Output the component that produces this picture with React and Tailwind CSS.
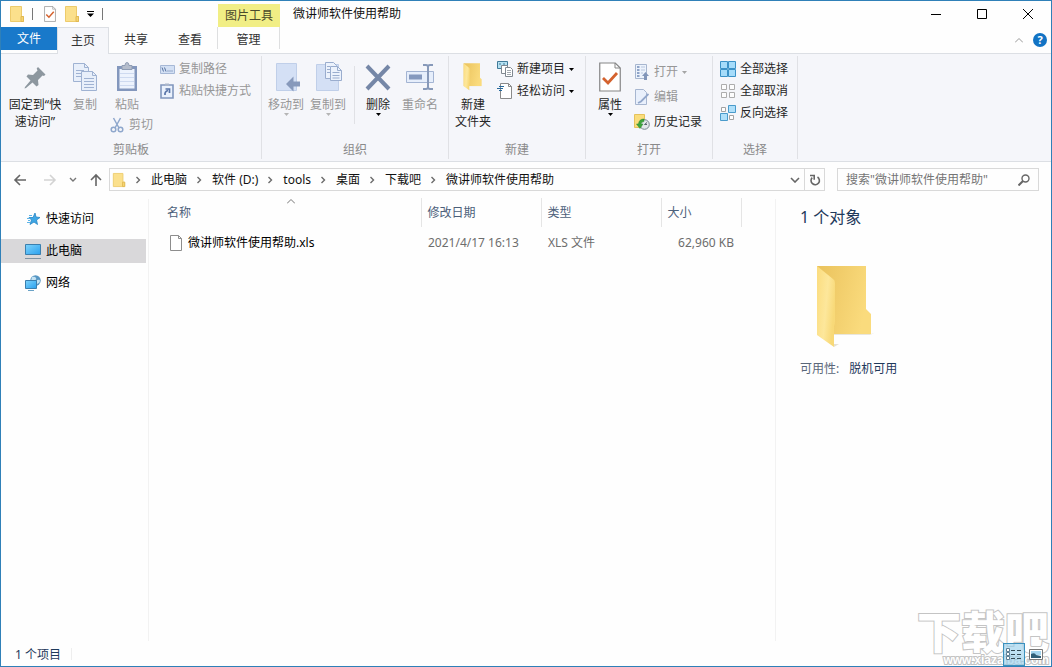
import { useState } from 'react';

const BigFolder = ({ className }) => (
  <svg viewBox="0 0 60 84" className={className}>
    <defs>
      <linearGradient id="folderBack" x1="0" y1="0" x2="1" y2="0.3">
        <stop offset="0" stopColor="#eac25c" />
        <stop offset="1" stopColor="#fadb7d" />
      </linearGradient>
      <linearGradient id="folderFront" x1="0" y1="0" x2="1" y2="0.4">
        <stop offset="0" stopColor="#fbdc7e" />
        <stop offset="0.6" stopColor="#fde79b" />
        <stop offset="1" stopColor="#f8d978" />
      </linearGradient>
    </defs>
    <path d="M18 69h38l5 -2l-6 3H18z" fill="#e9e6dc" />
    <path d="M2 1h49v43l5 5v20H2z" fill="url(#folderBack)" />
    <path d="M2 1l16 13q2 1 2 4v38q0 3-1 5v21L2 70z" fill="url(#folderFront)" />
    <path d="M19 82l5 -3h-5z" fill="#e5e1d4" />
  </svg>
);

const FolderIcon = ({ className = 'h-4 w-4' }) => (
  <svg viewBox="0 0 16 16" className={className}>
    <path d="M1.500.5h11v10h2v5h-13z" fill="#fbe08c" stroke="#edcb6b" />
    <path d="M12 10.500h2.500v5H12z" fill="#f7d570" stroke="#e0b955" />
  </svg>
);

const CheckDoc = ({ className }) => (
  <svg viewBox="0 0 22 30" className={className} fill="none">
    <path d="M.75 1h15.500l5 5v23H.75z" fill="#fff" stroke="#858585" strokeWidth="1.200" />
    <path d="M16 1v5h5" stroke="#858585" />
    <path d="M4 16l5 5 9-10" stroke="#d4622e" strokeWidth="2.800" />
  </svg>
);

const PinIcon = () => (
  <svg viewBox="0 0 24 24" className="h-6 w-6" fill="#8d979f">
    <path d="M15 2l7.500 7.500-1.500 1.500-1.500-.5-4.500 4.500 .5 5-2 1.500-4-4L3 23l-1.500 .5.5-1.500L7.500 15.500l-4-4L5 9.500l5 .5 4.500-4.500-.8-2z" />
  </svg>
);

const CopyIcon = () => (
  <svg viewBox="0 0 26 30" className="h-[30px] w-[26px]" fill="#e8effa" stroke="#9fb2d2">
    <path d="M1.500 1.500h11l4 4v14h-15z" />
    <path d="M12.500 1.500v4h4M4 8.500h8M4 11.500h5M4 14.500h5" fill="none" />
    <path d="M9.500 9.500h11l4 4v15h-15z" />
    <path d="M20.500 9.500v4h4M12 16.500h10M12 19.500h10M12 22.500h10M12 25.500h10" fill="none" />
  </svg>
);

const PasteIcon = () => (
  <svg viewBox="0 0 22 30" className="h-[30px] w-[22px]" fill="none">
    <path d="M1 4h20v25H1z" fill="#8397bd" />
    <path d="M3.500 7h15v19.500h-15z" fill="#edf3fd" />
    <path d="M4 11.500h14M4 15.500h14M4 19.500h14M4 23.500h14" stroke="#cedaf0" />
    <path d="M6 3.500h3q0-3 2-3t2 3h3v4H6z" fill="#b4bccb" stroke="#8f9cb3" />
  </svg>
);

const CutIcon = () => (
  <svg viewBox="0 0 14 16" className="h-4 w-3.5" fill="none" stroke="#8ea7cc" strokeWidth="1.500">
    <path d="M3.500 1l5.500 10M10.500 1L5 11" />
    <circle cx="3.500" cy="12.500" r="2.300" />
    <circle cx="10.500" cy="12.500" r="2.300" />
  </svg>
);

const PathIcon = () => (
  <svg viewBox="0 0 15 9" className="h-[9px] w-[15px]" fill="none">
    <path d="M.5.5h14v8H.5z" fill="#d3e0f4" stroke="#a6b8d6" />
    <path d="M2 2.500l1.500 4M4.500 2.500L6 6.500M7.500 6h1M9.500 6h1M11.500 6h1" stroke="#54709f" />
  </svg>
);

const ShortcutIcon = () => (
  <svg viewBox="0 0 14 16" className="h-4 w-3.5" fill="none">
    <path d="M1 2h12v13H1z" fill="#eaf1fc" stroke="#8197bd" strokeWidth="1.600" />
    <path d="M5 .5h4v2.500H5z" fill="#aab6cb" />
    <path d="M5 12q-.5-3.500 3-4.500M5.500 6h4v4" stroke="#5874a8" strokeWidth="1.700" />
  </svg>
);

const MoveToIcon = () => (
  <svg viewBox="0 0 28 30" className="h-[30px] w-7">
    <path d="M4.500 1.500h20v27h-20z" fill="#d4e0f5" stroke="#c0cfe9" />
    <path d="M14 22l7.500-7.500v5H29v5h-7.500v5z" fill="#8799bb" />
  </svg>
);

const CopyToIcon = () => (
  <svg viewBox="0 0 28 30" className="h-[30px] w-7" fill="#ecf2fc" stroke="#9aadce">
    <path d="M2.500 2.500h22v26h-22z" fill="#d4e0f5" stroke="#c0cfe9" />
    <path d="M11.500.5h8l3 3v13h-11z" />
    <path d="M16.500 4.500h7l4 4v10h-11z" />
    <path d="M23.500 4.500v4h4M18.500 10.500h7M18.500 13.500h7M18.500 16h7M13 4.500h3M13 7.500h3M13 10.500h3" fill="none" />
  </svg>
);

const DeleteIcon = () => (
  <svg viewBox="0 0 26 30" className="h-[30px] w-[26px]" fill="none">
    <path d="M2 4l22 23M24 4L2 27" stroke="#7587a7" strokeWidth="4" />
  </svg>
);

const RenameIcon = () => (
  <svg viewBox="0 0 28 30" className="h-[30px] w-7" fill="none">
    <path d="M.5 9.500h27v11H.5z" fill="#e6eefb" stroke="#a3b4d3" />
    <path d="M3 12.500h13v5H3z" fill="#8599be" />
    <path d="M17 3h3q2 0 2 2v20q0 2-2 2h-3M27 3h-3q-2 0-2 2M27 27h-3q-2 0-2-2" stroke="#8799b9" strokeWidth="2" />
  </svg>
);

const NewItemIcon = () => (
  <svg viewBox="0 0 16 16" className="h-4 w-4" fill="#fff" stroke="#808890">
    <path d="M.5.5h10v7H.5z" fill="#b5e1f2" stroke="#417b99" />
    <path d="M2 3h2M6 3h2" stroke="#417b99" />
    <path d="M4.500 4.500h6v8h-6z" />
    <path d="M8.500 6.500h5l2 2v7h-7z" />
    <path d="M10 9.500h4M10 11.500h4M10 13.500h4" stroke="#a2a8ae" />
  </svg>
);

const EasyAccessIcon = () => (
  <svg viewBox="0 0 16 16" className="h-4 w-4" fill="none">
    <path d="M3.500.5h8l3 3v12h-11z" fill="#fff" stroke="#8a8a8a" />
    <path d="M11.500.5v3h3" stroke="#8a8a8a" />
    <path d="M2 3.500h5M0 5.500h6M2 7.500h3" stroke="#27699c" />
  </svg>
);

const OpenIcon = () => (
  <svg viewBox="0 0 14 16" className="h-4 w-3.5" fill="none">
    <path d="M.5.5h11v14H.5z" fill="#edf3fc" stroke="#a7b6cf" />
    <path d="M2 3h2.500M2 6h2.500M2 9h2.500M2 12h2.500" stroke="#8fa4c8" strokeWidth="2" />
    <path d="M6 3h4M6 6h4M6 9h2" stroke="#b9c7df" />
    <path d="M10.500 8l3.500 4h-2v4H9v-4H7z" fill="#8296b9" />
  </svg>
);

const EditIcon = () => (
  <svg viewBox="0 0 14 16" className="h-4 w-3.5" fill="none">
    <path d="M.5.5h8l3 3v12H.5z" fill="#e9f0fc" stroke="#a7b6d0" />
    <path d="M13.500 5L6 12.500 3 14" stroke="#92a7cb" strokeWidth="1.800" />
  </svg>
);

const HistoryIcon = () => (
  <svg viewBox="0 0 16 16" className="h-4 w-4" fill="none">
    <path d="M.5.5h10v13H.5z" fill="#fadd7c" stroke="#e5c25b" />
    <circle cx="10.500" cy="10.500" r="4.800" fill="#e2e7ea" stroke="#76868f" />
    <path d="M10.500 10.500l2.500-2M10.500 10.500H13" stroke="#56646d" />
    <path d="M10 5q-5 0-5.500 5H2.500L6 14.500 9 10H7q0-2 3-2.500z" fill="#3da53c" stroke="#2b8430" strokeWidth=".5" />
  </svg>
);

const SelectAllIcon = () => (
  <svg viewBox="0 0 16 16" className="h-4 w-4" fill="#a6dcfa" stroke="#3c92c7">
    <path d="M.5.5h7v7h-7zM8.500.5h7v7h-7zM.5 8.500h7v7h-7zM8.500 8.500h7v7h-7z" />
  </svg>
);

const SelectNoneIcon = () => (
  <svg viewBox="0 0 16 16" className="h-4 w-4" fill="#fdfdfd" stroke="#adadad">
    <path d="M1.500 1.500h5v5h-5zM9.500 1.500h5v5h-5zM1.500 9.500h5v5h-5zM9.500 9.500h5v5h-5z" />
  </svg>
);

const InvertIcon = () => (
  <svg viewBox="0 0 16 16" className="h-4 w-4">
    <path d="M1.500 2.500h4v4h-4zM9.500 10.500h4v4h-4z" fill="#fff" stroke="#a3a3a3" />
    <path d="M8.500.5h7v7h-7zM.5 8.500h7v7h-7z" fill="#b0e0fa" stroke="#4a9bcb" />
  </svg>
);

const StarIcon = () => (
  <svg viewBox="0 0 16 16" className="h-4 w-4">
    <path d="M10 2l1 4 4 .5-3.500 2.500 1 4.500-3.500-2.500L5 13.500l1.500-4.500L4 6.500h4z" fill="#3fa7e5" stroke="#2785c4" strokeWidth=".8" />
    <path d="M4 4.500h3M2 7.500h3M3 9.500h2M2 11.500h3" stroke="#5db4e8" />
  </svg>
);

const PcIcon = () => (
  <svg viewBox="0 0 16 16" className="h-4 w-4">
    <defs>
      <linearGradient id="screen" x1="0" y1="0" x2="1" y2="1">
        <stop offset="0" stopColor="#7fd4fc" />
        <stop offset="1" stopColor="#2aa0ee" />
      </linearGradient>
    </defs>
    <path d="M.5 1.500h15v10H.5z" fill="url(#screen)" stroke="#3b7fae" />
    <path d="M0 15.500h16" stroke="#7f93a3" />
  </svg>
);

const NetworkIcon = () => (
  <svg viewBox="0 0 16 16" className="h-4 w-4">
    <circle cx="10.500" cy="5.500" r="5.200" fill="#5796c3" />
    <path d="M7 2q3-1 4 1t-2 2-3 1zM12 5q3-1 3 1t-3 3z" fill="#c4e2f2" />
    <path d="M.5 5.500h11v8H.5z" fill="url(#screen)" stroke="#3b7fae" />
    <path d="M3 15.500h6" stroke="#6aa2c6" />
  </svg>
);

const FileIcon = () => (
  <svg viewBox="0 0 12 16" className="h-4 w-3" fill="#fff" stroke="#8d8d8d">
    <path d="M.5.5h8l3 3v12H.5z" />
    <path d="M8.500.5v3h3" fill="none" />
  </svg>
);

const Caret = ({ className = 'text-black' }) => (
  <svg viewBox="0 0 5 3" className={`h-[3px] w-[5px] shrink-0 ${className}`} fill="currentColor">
    <path d="M0 0h5L2.500 3z" />
  </svg>
);

const Chevron = () => (
  <svg viewBox="0 0 25 8" className="h-2 w-[25px] shrink-0" fill="none" stroke="#6b6b6b" strokeWidth="1.400">
    <path d="M10.500 1l3 3-3 3" />
  </svg>
);

const BigButton = ({ icon, width, lines, disabled, caret }) => (
  <button type="button" className={`flex flex-col items-center pt-1 ${width} ${disabled ? 'text-[#979797]' : 'text-[#262626]'}`}>
    <span className="flex h-[30px] items-center justify-center">{icon}</span>
    <span className="mt-1 flex flex-col whitespace-nowrap leading-[17px]">
      {lines.map((line) => (
        <span key={line}>{line}</span>
      ))}
    </span>
    {caret && <Caret className={disabled ? 'text-[#b5b5b5]' : 'text-black'} />}
  </button>
);

const SmallButton = ({ icon, label, disabled, caret }) => (
  <button type="button" className={`flex h-[22px] items-center gap-1 whitespace-nowrap ${disabled ? 'text-[#979797]' : 'text-[#262626]'}`}>
    <span className="flex w-4 justify-center">{icon}</span>
    {label}
    {caret && <Caret className={disabled ? 'text-[#a5a5a5]' : 'text-black'} />}
  </button>
);

const Group = ({ label, width, children }) => (
  <section className={`my-0.5 flex shrink-0 flex-col border-r border-[#e0e1e5] ${width}`}>
    <div className="flex flex-1 pt-0.5">{children}</div>
    <h2 className="h-[18px] text-center leading-[18px] text-[#8a8a8a]">{label}</h2>
  </section>
);

const crumbs = ['此电脑', '软件 (D:)', 'tools', '桌面', '下载吧', '微讲师软件使用帮助'];

const places = [
  { name: '快速访问', icon: <StarIcon /> },
  { name: '此电脑', icon: <PcIcon /> },
  { name: '网络', icon: <NetworkIcon /> },
];

const files = [{ name: '微讲师软件使用帮助.xls', date: '2021/4/17 16:13', type: 'XLS 文件', size: '62,960 KB' }];

const TitleBar = () => (
  <header className="flex h-[26px] items-end">
    <div className="flex h-full w-[217px] shrink-0 items-center pl-2">
      <FolderIcon />
      <span className="ml-[7px] h-3 border-l border-[#777]" />
      <button type="button" aria-label="属性" className="ml-2.5">
        <CheckDoc className="h-4 w-3.5" />
      </button>
      <button type="button" aria-label="新建文件夹" className="ml-[7px]">
        <FolderIcon />
      </button>
      <button type="button" aria-label="自定义快速访问工具栏" className="ml-[7px]">
        <svg viewBox="0 0 7 6" className="h-1.5 w-[7px]">
          <path d="M0 0h7v1H0zM0 2.500h7L3.500 6z" />
        </svg>
      </button>
      <span className="ml-2 h-3 border-l border-[#777]" />
    </div>
    <div className="h-[23px] w-[62px] shrink-0 bg-[#f1ee85] text-center leading-[23px] text-[#4b4a2c]">图片工具</div>
    <h1 className="flex-1 self-center pl-[13px] text-[#111]">微讲师软件使用帮助</h1>
    <div className="flex h-full items-center text-black">
      <button type="button" aria-label="最小化" className="flex w-[46px] justify-center">
        <svg viewBox="0 0 10 10" className="h-2.5 w-2.5" stroke="currentColor"><path d="M0 5.500h10" /></svg>
      </button>
      <button type="button" aria-label="最大化" className="flex w-[46px] justify-center">
        <svg viewBox="0 0 10 10" className="h-2.5 w-2.5" fill="none" stroke="currentColor"><path d="M.5.5h9v9h-9z" /></svg>
      </button>
      <button type="button" aria-label="关闭" className="flex w-[46px] justify-center">
        <svg viewBox="0 0 10 10" className="h-2.5 w-2.5" stroke="currentColor"><path d="M0 0l10 10M10 0L0 10" /></svg>
      </button>
    </div>
  </header>
);

const Tabs = () => (
  <nav className="flex h-[26px] text-[#333]">
    <button type="button" className="h-[23px] w-14 bg-[#1979ca] text-white">文件</button>
    <button type="button" className="relative z-10 -mb-px w-[52px] border-x border-t border-[#dcdfe4] bg-[#f5f6fa]">主页</button>
    <button type="button" className="w-[54px]">共享</button>
    <button type="button" className="w-[54px]">查看</button>
    <button type="button" className="mb-1 w-[63px] border-x border-[#dedfe0] pt-1">管理</button>
    <div className="ml-auto flex items-center gap-2.5 pr-1">
      <button type="button" aria-label="最小化功能区">
        <svg viewBox="0 0 8 5" className="h-[5px] w-2" fill="none" stroke="#999"><path d="M0 4.500l4-4 4 4" /></svg>
      </button>
      <button type="button" aria-label="帮助" className="h-3.5 w-3.5 rounded-full bg-[#1273c4] text-center text-[11px] leading-[14px] font-bold text-white">?</button>
    </div>
  </nav>
);

const Ribbon = () => (
  <div className="flex h-[109px] border-y border-[#dcdfe4] bg-[#f5f6fa]">
    <Group label="剪贴板" width="w-[261px]">
      <BigButton icon={<PinIcon />} width="w-[68px]" lines={['固定到“快', '速访问”']} />
      <BigButton icon={<CopyIcon />} width="w-8" lines={['复制']} disabled />
      <div className="flex flex-col pl-1.5">
        <div className="flex h-14">
          <BigButton icon={<PasteIcon />} width="w-10" lines={['粘贴']} disabled />
          <div className="ml-3">
            <SmallButton icon={<PathIcon />} label="复制路径" disabled />
            <SmallButton icon={<ShortcutIcon />} label="粘贴快捷方式" disabled />
          </div>
        </div>
        <div className="pl-0.5">
          <SmallButton icon={<CutIcon />} label="剪切" disabled />
        </div>
      </div>
    </Group>
    <Group label="组织" width="w-[187px]">
      <div className="flex pl-[3px]">
        <BigButton icon={<MoveToIcon />} width="w-[42px]" lines={['移动到']} disabled caret />
        <BigButton icon={<CopyToIcon />} width="w-[42px]" lines={['复制到']} disabled caret />
        <span className="mr-0.5 ml-[5px] mt-2 h-[58px] border-l border-[#e0e1e5]" />
        <BigButton icon={<DeleteIcon />} width="w-[42px]" lines={['删除']} caret />
        <BigButton icon={<RenameIcon />} width="w-[42px]" lines={['重命名']} disabled />
      </div>
    </Group>
    <Group label="新建" width="w-[137px]">
      <BigButton icon={<BigFolder className="h-7 w-5" />} width="w-12" lines={['新建', '文件夹']} />
      <div>
        <SmallButton icon={<NewItemIcon />} label="新建项目" caret />
        <SmallButton icon={<EasyAccessIcon />} label="轻松访问" caret />
      </div>
    </Group>
    <Group label="打开" width="w-[127px]">
      <BigButton icon={<CheckDoc className="h-[30px] w-[22px]" />} width="w-12" lines={['属性']} caret />
      <div className="flex flex-col gap-[3px] pt-[3px]">
        <SmallButton icon={<OpenIcon />} label="打开" disabled caret />
        <SmallButton icon={<EditIcon />} label="编辑" disabled />
        <SmallButton icon={<HistoryIcon />} label="历史记录" />
      </div>
    </Group>
    <Group label="选择" width="w-[85px]">
      <div className="pl-[7px]">
        <SmallButton icon={<SelectAllIcon />} label="全部选择" />
        <SmallButton icon={<SelectNoneIcon />} label="全部取消" />
        <SmallButton icon={<InvertIcon />} label="反向选择" />
      </div>
    </Group>
  </div>
);

const AddressBar = () => {
  const [query, setQuery] = useState('');

  return (
    <div className="flex h-[35px] items-center pr-3 pl-3">
      <div className="flex w-24 shrink-0 items-center text-[#666]">
        <button type="button" aria-label="后退">
          <svg viewBox="0 0 14 12" className="h-3 w-3.5" fill="none" stroke="#666" strokeWidth="1.600"><path d="M7 1L2 6l5 5M2 6h11" /></svg>
        </button>
        <button type="button" aria-label="前进" className="ml-4">
          <svg viewBox="0 0 14 12" className="h-3 w-3.5" fill="none" stroke="#d3d3d3" strokeWidth="1.600"><path d="M7 1l5 5-5 5M12 6H1" /></svg>
        </button>
        <button type="button" aria-label="最近浏览的位置" className="ml-3">
          <svg viewBox="0 0 8 5" className="h-[5px] w-2" fill="none" stroke="#777" strokeWidth="1.400"><path d="M1 1l3 3 3-3" /></svg>
        </button>
        <button type="button" aria-label="上移" className="ml-3">
          <svg viewBox="0 0 14 14" className="h-3.5 w-3.5" fill="none" stroke="#666" strokeWidth="1.600"><path d="M2 7l5-5 5 5M7 2v11" /></svg>
        </button>
      </div>
      <div className="flex h-[23px] flex-1 items-center border border-[#d9d9d9] pl-0.5 text-[#111]">
        <FolderIcon className="h-4 w-3.5" />
        {crumbs.map((crumb) => (
          <span key={crumb} className="flex items-center whitespace-nowrap">
            <Chevron />
            <button type="button">{crumb}</button>
          </span>
        ))}
        <button type="button" aria-label="以前的位置" className="mr-1 ml-auto">
          <svg viewBox="0 0 10 6" className="h-1.5 w-2.5" fill="none" stroke="#666" strokeWidth="1.600"><path d="M1 1l4 4 4-4" /></svg>
        </button>
        <button type="button" aria-label="刷新" className="flex h-full w-5 items-center justify-center border-l border-[#d9d9d9]">
          <svg viewBox="0 0 12 12" className="h-3 w-3" fill="none" stroke="#666" strokeWidth="1.600"><path d="M8.500 3A4.200 4.200 0 1 1 3.200 3.600M1 1.500h4.200v4.200" /></svg>
        </button>
      </div>
      <div className="ml-3 flex h-[23px] w-[202px] items-center border border-[#d9d9d9] pr-2 pl-2">
        <input
          type="text"
          aria-label="搜索"
          placeholder={'搜索"微讲师软件使用帮助"'}
          className="w-full min-w-0 bg-transparent outline-none placeholder:text-[#757575]"
          value={query}
          onChange={(e) => setQuery(e.target.value)}
        />
        <svg viewBox="0 0 12 12" className="h-3 w-3 shrink-0" fill="none" stroke="#666"><circle cx="7.500" cy="4.500" r="3.500" strokeWidth="1.400" /><path d="M5 7l-4.500 4.500" strokeWidth="2" /></svg>
      </div>
    </div>
  );
};

const Sidebar = () => {
  const [active, setActive] = useState('此电脑');

  return (
    <aside className="mt-0.5 w-[148px] shrink-0 border-r border-[#f2f2f2] pt-2 pr-0.5">
      <ul className="flex flex-col gap-2">
        {places.map((place) => (
          <li key={place.name}>
            <button
              type="button"
              onClick={() => setActive(place.name)}
              className={`flex h-6 w-full items-center gap-[5px] pl-6 text-black ${active === place.name ? 'bg-[#d9d8da]' : ''}`}
            >
              {place.icon}
              {place.name}
            </button>
          </li>
        ))}
      </ul>
    </aside>
  );
};

const FileTable = () => (
  <main className="min-w-0 flex-1">
    <table className="mt-px table-fixed border-collapse text-left">
      <thead>
        <tr className="h-[29px] text-[#4c607a]">
          <th className="relative w-[272px] border-r border-[#e5e5e5] pl-[18px] font-normal">
            名称
            <svg viewBox="0 0 8 5" className="absolute top-px left-[138px] h-[5px] w-2" fill="none" stroke="#777"><path d="M0 4.500l4-4 4 4" /></svg>
          </th>
          <th className="w-[120px] border-r border-[#e5e5e5] pl-1.5 font-normal">修改日期</th>
          <th className="w-[120px] border-r border-[#e5e5e5] pl-1.5 font-normal">类型</th>
          <th className="w-20 border-r border-[#e5e5e5] pl-1.5 font-normal">大小</th>
        </tr>
      </thead>
      <tbody>
        {files.map((file) => (
          <tr key={file.name} className="h-8 whitespace-nowrap text-[#6d6d6d]">
            <td className="pl-[21px] text-black">
              <span className="flex items-center gap-1.5">
                <FileIcon />
                {file.name}
              </span>
            </td>
            <td className="pl-[7px]">{file.date}</td>
            <td className="pl-[7px]">{file.type}</td>
            <td className="pr-[7px] text-right">{file.size}</td>
          </tr>
        ))}
      </tbody>
    </table>
  </main>
);

const Details = () => (
  <aside className="mt-0.5 w-[276px] shrink-0 border-l border-[#f2f2f2] pt-1.5 pl-6">
    <h2 className="text-base text-[#1e395b]">1 个对象</h2>
    <BigFolder className="mt-9 ml-[15px] h-[84px] w-[60px]" />
    <dl className="mt-3 flex gap-2.5">
      <dt className="text-[#5a6779]">可用性:</dt>
      <dd className="text-[#1e395b]">脱机可用</dd>
    </dl>
  </aside>
);

const StatusBar = () => (
  <footer className="relative flex h-[25px] items-center pl-3.5 text-[#1e395b]">
    <span className="pt-0.5">1 个项目</span>
    <span className="ml-2.5 h-3 border-l border-[#eee]" />
    <div className="absolute right-0.5 bottom-0 flex flex-col items-end whitespace-nowrap text-white [paint-order:stroke_fill]">
      <span className="h-11 text-[44px] leading-[44px] font-black [-webkit-text-stroke:2px_#c4c4c4]">下载吧</span>
      <span className="h-3 font-['Liberation_Sans'] text-xs leading-3 font-bold [-webkit-text-stroke:2px_#c4c4c4]">www.xiazaiba.com</span>
    </div>
    <div className="relative ml-auto flex h-full items-end gap-1 pr-2">
      <button type="button" aria-label="详细信息" className="flex h-[23px] w-[22px] items-center justify-center border border-[#3a91be] bg-[#93cdeb]/60">
        <svg viewBox="0 0 16 13" className="h-[13px] w-4" fill="#fff" stroke="#5d7f94">
          <path d="M.5.5h3v3h-3zM.5 4.500h3v3h-3zM.5 8.500h3v3h-3z" />
          <path d="M5 2.500h4M11 2.500h4M5 6.500h4M11 6.500h4M5 10.500h4M11 10.500h4" stroke="#324955" />
        </svg>
      </button>
      <button type="button" aria-label="大缩略图" className="flex h-[23px] items-center">
        <svg viewBox="0 0 14 11" className="h-[11px] w-3.5">
          <path d="M.5.5h13v10H.5z" fill="#fff" stroke="#777" />
          <path d="M2 2h10v4H2z" fill="#a5d5ef" />
          <path d="M2 5q4-2 5 1l5 1v2H2z" fill="#315f78" />
        </svg>
      </button>
    </div>
  </footer>
);

export default function App() {
  return (
    <div className="flex min-h-screen flex-col border border-[#2f80b8] bg-[#fefefe] font-['Noto_Sans','Noto_Sans_CJK_SC',sans-serif] text-xs">
      <TitleBar />
      <Tabs />
      <Ribbon />
      <AddressBar />
      <div className="flex flex-1">
        <Sidebar />
        <FileTable />
        <Details />
      </div>
      <StatusBar />
    </div>
  );
}
